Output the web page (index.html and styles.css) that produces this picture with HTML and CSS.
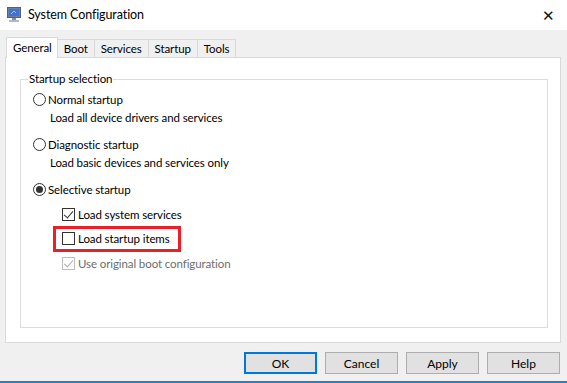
FILE: index.html
```
<!doctype html>
<html lang="en">
<head>
  <meta charset="utf-8" />
  <title>System Configuration</title>
  <link rel="stylesheet" href="styles.css">
</head>
<body>
  <div class="window">
    <div class="titlebar">
      <svg class="app-icon" width="14" height="15" viewBox="0 0 14 15">
        <rect x="0.5" y="0.5" width="13" height="10" fill="#6d7fa6" stroke="#5b5f73"/>
        <rect x="2" y="2" width="10" height="7" fill="#3f72d6"/>
        <path d="M4 7 L7 4 L9 6" stroke="#9fc0f5" fill="none"/>
        <rect x="5" y="11" width="4" height="2" fill="#8a8f9e"/>
        <rect x="2" y="13" width="10" height="2" fill="#b3b7c2"/>
      </svg>
      <span class="title">System Configuration</span>
      <span class="close">&#x2715;</span>
    </div>

    <div class="body">
      <div class="tabs">
        <div class="tab active">General</div>
        <div class="tab">Boot</div>
        <div class="tab">Services</div>
        <div class="tab">Startup</div>
        <div class="tab">Tools</div>
      </div>

      <div class="panel">
        <fieldset class="group">
          <legend>Startup selection</legend>

          <div class="opt"><span class="radio"></span>Normal startup</div>
          <div class="desc">Load all device drivers and services</div>

          <div class="opt gap"><span class="radio"></span>Diagnostic startup</div>
          <div class="desc">Load basic devices and services only</div>

          <div class="opt gap"><span class="radio on"></span>Selective startup</div>

          <div class="checks">
            <div class="chk"><span class="box on"></span>Load system services</div>
            <div class="chk marked"><span class="box"></span>Load startup items</div>
            <div class="chk off"><span class="box on"></span>Use original boot configuration</div>
          </div>
        </fieldset>
      </div>

      <div class="buttons">
        <button class="btn default">OK</button>
        <button class="btn">Cancel</button>
        <button class="btn">Apply</button>
        <button class="btn">Help</button>
      </div>
    </div>
    <div class="edge"></div>
  </div>
</body>
</html>
```

FILE: styles.css
```
html, body { margin:0; height:100%; }
body {
  font-family: Lato, "Noto Sans", "Liberation Sans", sans-serif;
  font-size:11.5px; letter-spacing:-0.1px; color:#000; background:#f0f0f0;
}
.window { width:567px; height:383px; display:flex; flex-direction:column; background:#f0f0f0; overflow:hidden; }

.titlebar {
  height:30px; background:#fff; display:flex; align-items:center;
  padding-left:7px; box-sizing:border-box;
}
.app-icon { margin-right:7px; margin-top:-2px; }
.title { font-size:12.5px; flex:1; margin-top:-1px; }
.close { width:20px; margin-right:9px; font-size:15px; color:#111; text-align:center; }

.body { flex:1; display:flex; flex-direction:column; padding:7px 6px 0 5px; }

.tabs { display:flex; height:20px; align-items:flex-end; padding-left:1px; }
.tab {
  height:18px; line-height:17px; padding:0 6px; box-sizing:border-box;
  background:#f0f0f0; border:1px solid #d9d9d9; border-bottom:none; margin-left:-1px;
}
.tab.active {
  height:21px; background:#fff; position:relative; z-index:1;
  margin-bottom:-1px; line-height:19px; padding:0 5px 0 6px; margin-left:0;
}

.panel {
  height:286px; background:#fff; border:1px solid #d9d9d9; box-sizing:border-box;
  padding:14px 12px 0 14px;
}
.group {
  margin:0; height:256px; box-sizing:border-box;
  border:1px solid #dcdcdc; padding:4px 0 0 12px;
}
.group legend { padding:0 1px; margin-left:-5px; line-height:14px; }

.opt { display:flex; align-items:center; height:18px; }
.opt.gap { margin-top:9px; }
.desc { height:18px; line-height:19px; padding-left:17px; }

.radio {
  width:11px; height:11px; border:1px solid #333; border-radius:50%;
  margin-right:2px; position:relative; flex:none;
}
.radio.on::after {
  content:""; position:absolute; left:2px; top:2px; width:7px; height:7px;
  border-radius:50%; background:#333;
}

.checks { padding-left:29px; margin-top:7px; }
.chk { display:flex; align-items:center; height:18px; margin-bottom:6.5px; position:relative; }
.box {
  width:11px; height:11px; border:1px solid #333; margin-right:3px; position:relative; flex:none;
}
.box.on::after {
  content:""; position:absolute; left:3px; top:0; width:4px; height:8px;
  border:solid #333; border-width:0 1.5px 1.5px 0; transform:rotate(40deg);
}
.chk.off { color:#6d6d6d; }
.chk.off .box { border-color:#bcbcbc; }
.chk.off .box.on::after { border-color:#adadad; }
.chk.marked::after {
  content:""; position:absolute; left:-9px; top:-4px; width:122px; height:20px;
  border:3px solid #e8202a;
}

.buttons { display:flex; justify-content:flex-end; gap:8px; padding:9px 1px 0 0; }
.btn {
  width:73px; height:22px; font:inherit; font-size:12px; background:#e1e1e1;
  border:1px solid #adadad; padding:0; color:#000;
}
.btn.default { border:2px solid #0078d7; }

.edge { height:2px; background:#1883d7; }
```
